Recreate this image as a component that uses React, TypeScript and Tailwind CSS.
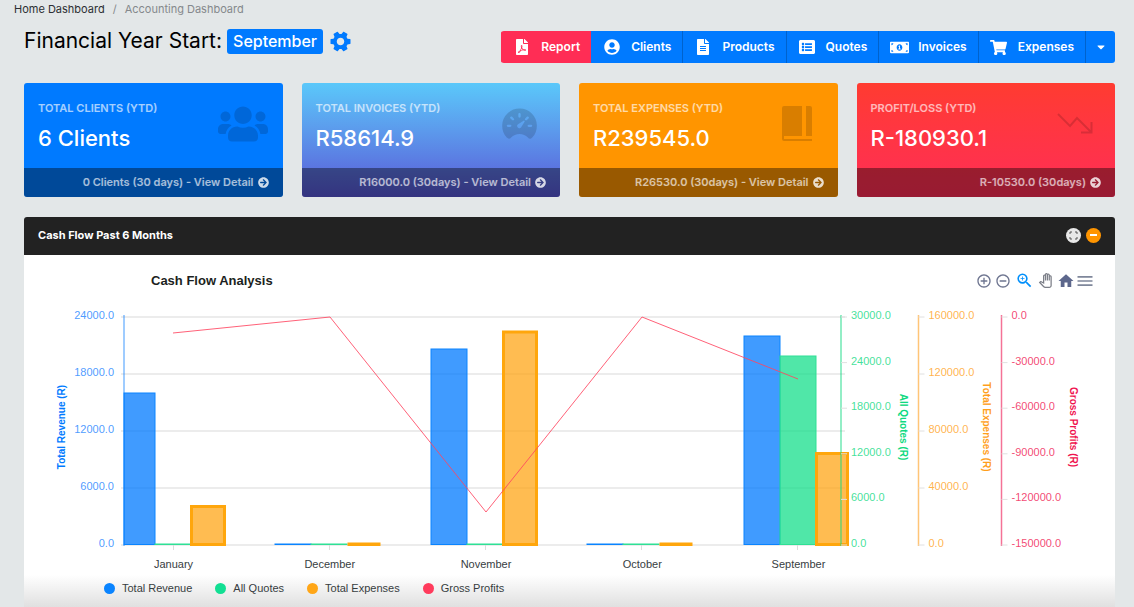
import React from "react";
import {
  FaArrowCircleRight,
  FaCaretDown,
  FaFileAlt,
  FaFilePdf,
  FaListAlt,
  FaMoneyBillAlt,
  FaShoppingCart,
  FaUserCircle,
  FaUsers,
} from "react-icons/fa";
import { IoSpeedometer } from "react-icons/io5";
import {
  MdAddCircleOutline,
  MdHome,
  MdMenu,
  MdOutlinePanTool,
  MdRemoveCircleOutline,
  MdZoomIn,
} from "react-icons/md";

const actions = [
  { label: "Report", icon: <FaFilePdf size={16} />, tone: "bg-[#ff2d55] border-[#ff2d55]" },
  { label: "Clients", icon: <FaUserCircle size={16} />, tone: "bg-[#007aff] border-[#007aff]" },
  { label: "Products", icon: <FaFileAlt size={16} />, tone: "bg-[#007aff] border-[#0062cc]" },
  { label: "Quotes", icon: <FaListAlt size={16} />, tone: "bg-[#007aff] border-[#0062cc]" },
  { label: "Invoices", icon: <FaMoneyBillAlt size={19} />, tone: "bg-[#007aff] border-[#0062cc]" },
  { label: "Expenses", icon: <FaShoppingCart size={17} />, tone: "bg-[#007aff] border-[#0062cc]" },
];

function CogIcon() {
  return (
    <svg viewBox="0 0 24 24" className="size-[25px] fill-[#007aff]" aria-hidden="true">
      <g transform="rotate(90 12 12)">
        <path d="M19.14 12.94c.04-.3.06-.61.06-.94 0-.32-.02-.64-.07-.94l2.03-1.58a.49.49 0 0 0 .12-.61l-1.92-3.32a.488.488 0 0 0-.59-.22l-2.39.96c-.5-.38-1.03-.7-1.62-.94l-.36-2.54a.484.484 0 0 0-.48-.41h-3.84c-.24 0-.43.17-.47.41l-.36 2.54c-.59.24-1.13.57-1.62.94l-2.39-.96c-.22-.08-.47 0-.59.22L2.74 8.87c-.12.21-.08.47.12.61l2.03 1.58c-.05.3-.09.63-.09.94s.02.64.07.94l-2.03 1.58a.49.49 0 0 0-.12.61l1.92 3.32c.12.22.37.29.59.22l2.39-.96c.5.38 1.03.7 1.62.94l.36 2.54c.05.24.24.41.48.41h3.84c.24 0 .44-.17.47-.41l.36-2.54c.59-.24 1.13-.56 1.62-.94l2.39.96c.22.08.47 0 .59-.22l1.92-3.32c.12-.22.07-.47-.12-.61l-2.01-1.58zM12 15.6c-1.98 0-3.6-1.62-3.6-3.6s1.62-3.6 3.6-3.6 3.6 1.62 3.6 3.6-1.62 3.6-3.6 3.6z" />
      </g>
    </svg>
  );
}

function BookIcon() {
  return (
    <svg viewBox="0 0 30 36" className="h-9 w-[30px]" fill="currentColor" aria-hidden="true">
      <path d="M2 0H20V30H2V33H30V35H2Q0 35 0 33V2Q0 0 2 0Z" />
      <path d="M24 0H28Q30 0 30 2V30H24Z" />
    </svg>
  );
}

function TrendDownIcon() {
  return (
    <svg viewBox="0 0 36 22" className="h-[22px] w-9" fill="none" stroke="currentColor" strokeWidth="2" aria-hidden="true">
      <path d="M1 1L13 13L20 5L34 19M24 19.500H34.500V9" />
    </svg>
  );
}

const cards = [
  {
    label: "TOTAL CLIENTS (YTD)",
    value: "6 Clients",
    foot: "0 Clients (30 days) - View Detail",
    tone: "bg-[#007aff]",
    icon: <FaUsers size={50} />,
  },
  {
    label: "TOTAL INVOICES (YTD)",
    value: "R58614.9",
    foot: "R16000.0 (30days) - View Detail",
    tone: "bg-linear-to-b from-[#5ac8fa] to-[#5856d6]",
    icon: <IoSpeedometer size={37} />,
  },
  {
    label: "TOTAL EXPENSES (YTD)",
    value: "R239545.0",
    foot: "R26530.0 (30days) - View Detail",
    tone: "bg-[#ff9500]",
    icon: <BookIcon />,
  },
  {
    label: "PROFIT/LOSS (YTD)",
    value: "R-180930.1",
    foot: "R-10530.0 (30days)",
    tone: "bg-linear-to-b from-[#ff3b30] to-[#ff2d55]",
    icon: <TrendDownIcon />,
  },
];

const iconInsets = ["pr-[15px]", "pr-[22px]", "pr-[26px]", "pr-[22px]"];

const revenueBars = [
  [100, 31, 93],
  [251, 36, 244],
  [407, 36, 49],
  [563, 36, 244],
  [720, 36, 36],
];
const quoteBars = [
  [131, 35, 244],
  [287, 36, 244],
  [443, 36, 244],
  [599, 36, 244],
  [756, 36, 56],
];
const expenseBars = [
  [167.5, 33, 206.5],
  [325, 30, 244],
  [479.5, 33, 32],
  [637, 30, 244],
  [792.5, 31, 153.5],
];
const months = ["January", "December", "November", "October", "September"];

type AxisProps = { x: number; color: string; labels: string[]; title: string; titleX: number };

function RightAxis({ x, color, labels, title, titleX }: AxisProps) {
  const step = 228 / (labels.length - 1);
  return (
    <g>
      <line x1={x} x2={x} y1="15" y2="246" stroke={color} strokeOpacity="0.6" strokeWidth="1.500" />
      {labels.map((label, i) => (
        <g key={label}>
          <line x1={x} x2={x + 6} y1={17 + i * step} y2={17 + i * step} stroke="#e0e0e0" />
          <text x={x + 10} y={19 + i * step} fill={color} fillOpacity="0.8">
            {label}
          </text>
        </g>
      ))}
      <text transform={`translate(${titleX} 127) rotate(90)`} textAnchor="middle" fontWeight="700" fontSize="10" fill={color}>
        {title}
      </text>
    </g>
  );
}

function CashFlowChart() {
  return (
    <svg
      viewBox="0 0 1091 275"
      className="block h-auto w-full"
      fontFamily="'Liberation Sans', Arial, sans-serif"
      fontSize="11"
      role="img"
      aria-label="Cash flow by month"
    >
      {["24000.0", "18000.0", "12000.0", "6000.0", "0.0"].map((label, i) => (
        <g key={label}>
          <line x1="97" x2="821" y1={17 + i * 57} y2={17 + i * 57} stroke="#e6e6e6" strokeWidth="1.300" />
          <text x="90" y={19 + i * 57} textAnchor="end" fill="#1a82ff" fillOpacity="0.8">
            {label}
          </text>
        </g>
      ))}
      <line x1="100" x2="100" y1="15" y2="246" stroke="#007aff" strokeOpacity="0.5" strokeWidth="1.500" />
      <text transform="translate(41 127) rotate(-90)" textAnchor="middle" fontWeight="700" fontSize="10" fill="#007aff">
        Total Revenue (R)
      </text>
      {revenueBars.map(([x, w, y]) => (
        <rect key={x} x={x} y={y} width={w} height={244.5 - y} fill="#007aff" fillOpacity="0.75" stroke="#0a84ff" />
      ))}
      {quoteBars.map(([x, w, y]) => (
        <rect key={x} x={x} y={y} width={w} height={244.5 - y} fill="#16df8b" fillOpacity="0.75" stroke="#2fe095" />
      ))}
      {expenseBars.map(([x, w, y]) => (
        <rect key={x} x={x} y={y} width={w} height={244.5 - y} fill="#ffa617" fillOpacity="0.75" stroke="#ffa60c" strokeWidth="3" />
      ))}
      <polyline points="149,33 306,17 462,212 618,17 774,79" fill="none" stroke="#ff4560" strokeOpacity="0.85" />
      {months.map((month, i) => (
        <g key={month}>
          <line x1={149.5 + i * 156} x2={149.5 + i * 156} y1="245" y2="250" stroke="#dcdcdc" />
          <text x={149.5 + i * 156.25} y="268" textAnchor="middle" fill="#373d3f">
            {month}
          </text>
        </g>
      ))}
      <RightAxis x={817} color="#0fd981" title="All Quotes (R)" titleX={876} labels={["30000.0", "24000.0", "18000.0", "12000.0", "6000.0", "0.0"]} />
      <RightAxis x={894.5} color="#ff9f1c" title="Total Expenses (R)" titleX={959} labels={["160000.0", "120000.0", "80000.0", "40000.0", "0.0"]} />
      <RightAxis x={977.5} color="#ef1450" title="Gross Profits (R)" titleX={1046} labels={["0.0", "-30000.0", "-60000.0", "-90000.0", "-120000.0", "-150000.0"]} />
    </svg>
  );
}

const legend = [
  { label: "Total Revenue", dot: "bg-[#0a84ff]" },
  { label: "All Quotes", dot: "bg-[#12df93]" },
  { label: "Total Expenses", dot: "bg-[#ffa617]" },
  { label: "Gross Profits", dot: "bg-[#ff3b5c]" },
];

const tools = [
  { label: "Zoom in", icon: <MdAddCircleOutline size={16} />, tone: "text-[#6e7590]" },
  { label: "Zoom out", icon: <MdRemoveCircleOutline size={16} />, tone: "ml-[3px] text-[#6e7590]" },
  { label: "Selection zoom", icon: <MdZoomIn size={19} />, tone: "ml-1 text-[#008ffb]" },
  { label: "Pan", icon: <MdOutlinePanTool size={15} />, tone: "ml-1 text-[#7c7f88]" },
  { label: "Reset zoom", icon: <MdHome size={18} />, tone: "ml-1 text-[#5d678c]" },
  { label: "Menu", icon: <MdMenu size={20} />, tone: "text-[#7f879b]" },
];

export default function App() {
  return (
    <div className="flex min-h-screen flex-col overflow-x-hidden bg-[#e3e7e8] font-['Inter',sans-serif] text-black">
      <nav aria-label="Breadcrumb" className="flex h-[19px] items-center gap-2 px-3.5 text-[11px]">
        <a href="#home" className="text-[#2c2f33]">
          Home Dashboard
        </a>
        <span className="text-[#85898c]">/</span>
        <span className="text-[#85898c]">Accounting Dashboard</span>
      </nav>

      <main className="flex grow flex-col pr-[19px] pl-6">
        <header className="flex h-16 items-start justify-between">
          <div className="flex items-center pt-2">
            <h1 className="text-[21px] leading-7">Financial Year Start:</h1>
            <span className="ml-[5px] flex h-[25px] items-center rounded-[3px] bg-[#007aff] px-1.5 text-base font-medium text-white">
              September
            </span>
            <button type="button" aria-label="Settings" className="ml-[5px]">
              <CogIcon />
            </button>
          </div>
          <div className="mt-3 flex h-8 overflow-hidden rounded-[3px] text-xs font-semibold text-white">
            {actions.map((a) => (
              <button key={a.label} type="button" className={`flex items-center gap-[9px] border-l pr-[11px] pl-2.5 ${a.tone}`}>
                <span className="flex w-5 justify-center">{a.icon}</span>
                {a.label}
              </button>
            ))}
            <button type="button" aria-label="More actions" className="flex w-[30px] items-center justify-center border-l border-[#0062cc] bg-[#007aff]">
              <FaCaretDown size={12} />
            </button>
          </div>
        </header>

        <section className="grid grid-cols-4 gap-[19px]">
          {cards.map((c, i) => (
            <article key={c.label} className={`flex flex-col overflow-hidden rounded-[3px] ${c.tone}`}>
              <div className={`flex h-[85px] items-center justify-between pb-1 pl-3.5 ${iconInsets[i]}`}>
                <div className="pt-1">
                  <h2 className="text-[11px] leading-4 font-semibold text-white/65">{c.label}</h2>
                  <p className="mt-2 text-[22px] leading-7 font-medium text-white">{c.value}</p>
                </div>
                <span className="text-black/15">{c.icon}</span>
              </div>
              <a href="#detail" className="flex h-[29px] items-center justify-end gap-1 bg-black/40 pr-3.5 text-[11px] font-semibold text-white/65">
                {c.foot}
                <FaArrowCircleRight size={11} className="text-white/80" />
              </a>
            </article>
          ))}
        </section>

        <section className="mt-5 flex grow flex-col overflow-hidden rounded-t-[3px] bg-white">
          <div className="flex h-[38px] items-center justify-between bg-[#222222] px-3.5 pb-0.5">
            <h2 className="text-[11px] font-bold text-white">Cash Flow Past 6 Months</h2>
            <div className="flex gap-[5px]">
              <button type="button" aria-label="Expand" className="flex size-[15px] items-center justify-center rounded-full bg-[#e8e8e8]">
                <svg viewBox="0 0 9 9" className="size-[9px]" fill="none" stroke="#555" aria-hidden="true">
                  <path d="M1 3V1H3M6 1H8V3M8 6V8H6M3 8H1V6" />
                </svg>
              </button>
              <button type="button" aria-label="Collapse" className="flex size-[15px] items-center justify-center rounded-full bg-[#ff9500]">
                <span className="h-0.5 w-[7px] bg-white" />
              </button>
            </div>
          </div>
          <div className="flex h-[45px] items-center justify-between pt-1.5 pr-5 pl-[127px]">
            <h3 className="font-['Liberation_Sans',Arial,sans-serif] text-[13px] font-bold text-[#1c1f21]">Cash Flow Analysis</h3>
            <div className="flex items-center">
              {tools.map((t) => (
                <button key={t.label} type="button" aria-label={t.label} className={t.tone}>
                  {t.icon}
                </button>
              ))}
            </div>
          </div>
          <CashFlowChart />
          <ul className="flex h-8 items-center gap-[23px] bg-linear-to-b from-white to-[#e0e0e0] pb-1.5 pl-20 font-['Liberation_Sans',Arial,sans-serif] text-[11px] text-[#373d3f]">
            {legend.map((l) => (
              <li key={l.label} className="flex items-center gap-[7px]">
                <span className={`size-[11px] rounded-full ${l.dot}`} />
                {l.label}
              </li>
            ))}
          </ul>
        </section>
      </main>
    </div>
  );
}
